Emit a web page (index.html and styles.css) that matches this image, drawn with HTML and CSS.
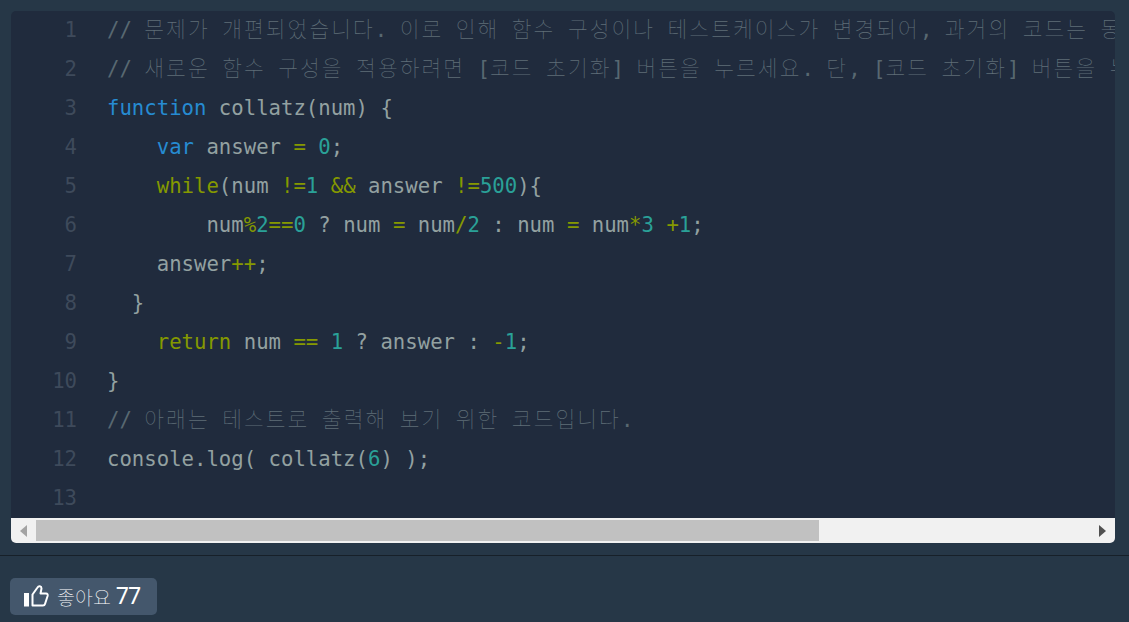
FILE: index.html
```html
<!DOCTYPE html>
<html lang="ko">
<head>
<meta charset="utf-8">
<title>Code</title>
<link rel="stylesheet" href="styles.css">
</head>
<body>
<main class="pane">
  <div class="editor">
    <div class="lines">
      <div class="line"><span class="num">1</span><code class="code cm">// <span class="ko">문제가</span> <span class="ko">개편되었습니다</span>. <span class="ko">이로</span> <span class="ko">인해</span> <span class="ko">함수</span> <span class="ko">구성이나</span> <span class="ko">테스트케이스가</span> <span class="ko">변경되어</span>, <span class="ko">과거의</span> <span class="ko">코드는</span> <span class="ko">동작하지</span> <span class="ko">않을</span> <span class="ko">수</span> <span class="ko">있습니다</span>.</code></div>
      <div class="line"><span class="num">2</span><code class="code cm">// <span class="ko">새로운</span> <span class="ko">함수</span> <span class="ko">구성을</span> <span class="ko">적용하려면</span> [<span class="ko">코드</span> <span class="ko">초기화</span>] <span class="ko">버튼을</span> <span class="ko">누르세요</span>. <span class="ko">단</span>, [<span class="ko">코드</span> <span class="ko">초기화</span>] <span class="ko">버튼을</span> <span class="ko">누르면</span> <span class="ko">작성</span> <span class="ko">중인</span> <span class="ko">코드는</span> <span class="ko">사라집니다</span>.</code></div>
      <div class="line"><span class="num">3</span><code class="code"><span class="kw">function</span> collatz(num) {</code></div>
      <div class="line"><span class="num">4</span><code class="code">    <span class="kw">var</span> answer <span class="op">=</span> <span class="nu">0</span>;</code></div>
      <div class="line"><span class="num">5</span><code class="code">    <span class="op">while</span>(num <span class="op">!=</span><span class="nu">1</span> <span class="op">&amp;&amp;</span> answer <span class="op">!=</span><span class="nu">500</span>){</code></div>
      <div class="line"><span class="num">6</span><code class="code">        num<span class="op">%</span><span class="nu">2</span><span class="op">==</span><span class="nu">0</span> ? num <span class="op">=</span> num<span class="op">/</span><span class="nu">2</span> : num <span class="op">=</span> num<span class="op">*</span><span class="nu">3</span> <span class="op">+</span><span class="nu">1</span>;</code></div>
      <div class="line"><span class="num">7</span><code class="code">    answer<span class="op">++</span>;</code></div>
      <div class="line"><span class="num">8</span><code class="code">  }</code></div>
      <div class="line"><span class="num">9</span><code class="code">    <span class="op">return</span> num <span class="op">==</span> <span class="nu">1</span> ? answer : <span class="op">-</span><span class="nu">1</span>;</code></div>
      <div class="line"><span class="num">10</span><code class="code">}</code></div>
      <div class="line"><span class="num">11</span><code class="code cm">// <span class="ko">아래는</span> <span class="ko">테스트로</span> <span class="ko">출력해</span> <span class="ko">보기</span> <span class="ko">위한</span> <span class="ko">코드입니다</span>.</code></div>
      <div class="line"><span class="num">12</span><code class="code">console.log( collatz(<span class="nu">6</span>) );</code></div>
      <div class="line"><span class="num">13</span><code class="code"></code></div>
    </div>
    <div class="scrollbar">
      <svg class="arrow" width="7" height="12" viewBox="0 0 7 12"><path d="M7 0V12L0 6Z" fill="#a3a3a3"/></svg>
      <div class="track"><div class="thumb"></div></div>
      <svg class="arrow" width="7" height="12" viewBox="0 0 7 12"><path d="M0 0V12L7 6Z" fill="#505050"/></svg>
    </div>
  </div>
</main>
<footer class="foot">
  <button class="like" type="button">
    <svg class="thumbs" width="25" height="22" viewBox="0 0 25 22" fill="none"><rect x="0" y="8" width="5" height="13.500" fill="#fff"/><path d="M8.500 9.500 13.500 2.500C14.500.8 17.500.8 17.500 3.500L16.500 8.500H22C23.500 8.500 24 9.500 23.600 11L21 19C20.700 20 20 20.500 19 20.500H8.500Z" stroke="#fff" stroke-width="2" stroke-linejoin="round"/></svg>
    <span class="label">좋아요</span><span class="count">77</span>
  </button>
</footer>
</body>
</html>
```
FILE: styles.css
```css
* { box-sizing: border-box; }
html, body { margin: 0; height: 100%; }
body {
  background: #263747;
  overflow: hidden;
  display: flex;
  flex-direction: column;
}
.pane {
  padding: 11px 14px 12px 11px;
  border-bottom: 1px solid #172029;
}
.editor {
  background: #202b3d;
  border-radius: 5px;
  overflow: hidden;
}
.lines { height: 507px; overflow: hidden; }
.line {
  display: flex;
  height: 39px;
  line-height: 39px;
  font-family: "DejaVu Sans Mono", "Noto Sans CJK KR", monospace;
  font-size: 20.65px;
  white-space: pre;
}
.num {
  flex: none;
  width: 66px;
  text-align: right;
  color: #3e4a5b;
}
.code {
  margin-left: 30px;
  font-family: inherit;
  font-size: inherit;
  line-height: inherit;
  color: #93a1a1;
}
.cm { color: #586871; }
.ko {
  font-family: "Noto Sans CJK KR", sans-serif;
  font-weight: 100;
  font-size: 21.5px;
  line-height: 0;
  letter-spacing: 2.03px;
  color: #5f6e78;
}
.kw { color: #268bd2; }
.op { color: #859900; }
.nu { color: #2aa198; }
.scrollbar {
  height: 25px;
  background: #f1f1f1;
  display: flex;
  align-items: center;
  padding: 0 9px;
}
.arrow { flex: none; }
.track { flex: 1; height: 21px; margin: 0 9px; }
.thumb { width: 783px; height: 100%; background: #c1c1c1; }
.foot { padding: 22px 10px 0; }
.like {
  display: flex;
  align-items: center;
  height: 37px;
  width: 147px;
  padding: 0 0 0 14px;
  border: none;
  border-radius: 5px;
  background: #44576c;
  color: #fff;
  font-family: "Noto Sans", "Noto Sans CJK KR", sans-serif;
}
.thumbs { flex: none; margin: -2px 8px 0 0; }
.label { font-family: "Noto Sans CJK KR", sans-serif; font-weight: 100; font-size: 19.5px; line-height: 1; }
.count { font-size: 23px; line-height: 1; letter-spacing: -1px; margin: -2px 0 0 5px; }
```
